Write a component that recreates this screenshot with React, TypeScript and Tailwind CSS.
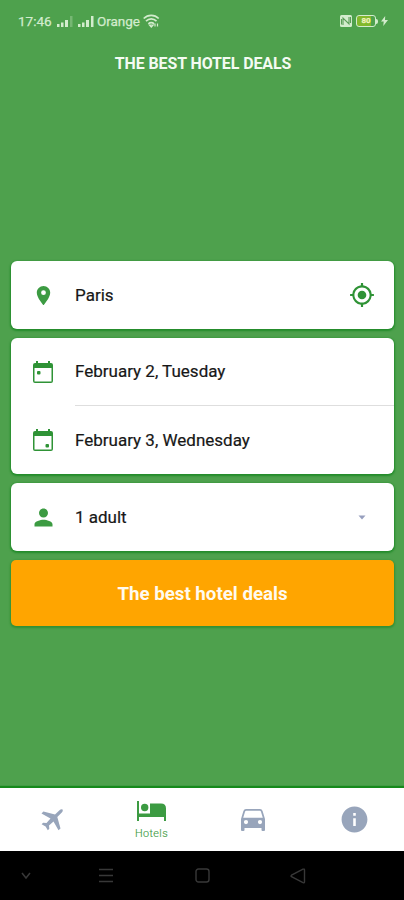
import type { ReactNode } from 'react';
import { MdPlace, MdMyLocation, MdPerson, MdInfo } from 'react-icons/md';

function Calendar({ end = false }: { end?: boolean }) {
  return (
    <svg width="22" height="24" viewBox="0 0 22 24" fill="#2f9336">
      <path fillRule="evenodd" d="M4 1h2v2h10V1h2v2h1a2 2 0 0 1 2 2v16a2 2 0 0 1-2 2H3a2 2 0 0 1-2-2V5a2 2 0 0 1 2-2h1V1ZM2.500 8v13.500h17V8h-17Z" />
      {end ? <rect x="13.500" y="16" width="3.500" height="3.500" rx="1" /> : <rect x="5" y="11" width="3.500" height="3.500" rx="1" />}
    </svg>
  );
}

function Signal({ full = false }: { full?: boolean }) {
  return (
    <svg width="18" height="12" viewBox="0 0 18 12" fill="#d3eccd">
      <path d="M1 9h2.500v3H1zM5 7.500h2.500V12H5zM9 5h3v7H9z" />
      <path d="M14 1h2.500v11H14z" opacity={full ? 1 : 0.3} />
    </svg>
  );
}

function Wifi() {
  return (
    <svg width="17" height="14" viewBox="0 0 17 14" fill="none" stroke="#d3eccd" strokeWidth="1.700">
      <path d="M.7 4.500c4.300-4.200 10.800-4.200 15 0M3 7.200c3-3 7.500-3 10.500 0M5.400 9.800c1.600-1.600 4-1.600 5.600 0" />
      <path d="m6.500 11 1.800 2 1.800-2ZM12 9.500v3M14.500 9.500v3" strokeWidth="1.200" />
    </svg>
  );
}

function Row({ icon, children, right }: { icon: ReactNode; children: ReactNode; right?: ReactNode }) {
  return (
    <div className="flex h-[68px] items-center">
      <div className="flex w-16 shrink-0 items-center justify-center text-[#3c9b42]">{icon}</div>
      <div className="flex-1 whitespace-nowrap pt-px text-[17px] text-[#171717] [-webkit-text-stroke:0.200px]">{children}</div>
      {right && <div className="flex w-16 items-center justify-center">{right}</div>}
    </div>
  );
}

const card = 'rounded-[6px] bg-white shadow-[0_1px_2px_1px_#238c2b]';

export default function App() {
  return (
    <div className="flex h-[900px] w-[404px] flex-col overflow-hidden bg-[#4ea14d] font-['Roboto',sans-serif]">
      <header className="flex h-[42px] shrink-0 items-center pl-[18px] pr-[16px] text-[13px] text-[#d3eccd] [-webkit-text-stroke:0.250px]">
        <span className="w-[38px] text-[13.500px]">17:46</span>
        <Signal />
        <span className="ml-[3px] flex"><Signal full /></span>
        <span className="ml-[2px] w-[46px] text-[13.500px] tracking-[-0.050px]">Orange</span>
        <Wifi />
        <div className="ml-auto flex items-center">
          <svg width="12" height="12" viewBox="0 0 12 12">
            <rect width="12" height="12" rx="1.500" fill="#d3eccd" />
            <path d="M3 10V3l6 6V2M1.500 9.500V4M10.500 8V2" fill="none" stroke="#5b9e58" strokeWidth="1.100" />
          </svg>
          <div className="ml-[4px] flex h-[12px] w-[20px] items-center justify-center rounded-[3px] border border-[#d3eccd] bg-linear-to-r from-[#82b82c] from-75% to-[#4ea14d] to-75% text-[8px] font-bold leading-none text-[#f1f3be]">80</div>
          <span className="h-[5px] w-[2px] rounded-r bg-[#d3eccd]" />
          <svg className="ml-[3px]" width="7" height="10" viewBox="0 0 7 10" fill="#d3eccd"><path d="M4.200 0 0 5.500h2.700L2.300 10 7 4H4z" /></svg>
        </div>
      </header>
      <h1 className="h-[219px] shrink-0 pt-[12px] pl-[2px] text-center text-[15.900px] font-bold leading-5 tracking-[-0.050px] text-[#f4fbf2]">THE BEST HOTEL DEALS</h1>

      <main className="flex flex-1 flex-col gap-[9px] pl-[11px] pr-[10px]">
        <section className={card}>
          <Row icon={<MdPlace size={23} />} right={<MdMyLocation size={26} color="#2f9336" />}>Paris</Row>
        </section>
        <section className={card}>
          <div className="-mb-px"><Row icon={<Calendar />}><span className="block pb-[2px]">February 2, Tuesday</span></Row></div>
          <div className="ml-16 border-t border-[#dedede]" />
          <Row icon={<Calendar end />}>February 3, Wednesday</Row>
        </section>
        <section className={card}>
          <Row
            icon={<MdPerson size={27} />}
            right={<svg width="8" height="5" viewBox="0 0 8 5" fill="#979fbe"><path d="M.5.500h7L4 4.500z" /></svg>}
          >
            1 adult
          </Row>
        </section>
        <button className="h-[66px] rounded-[5px] bg-[#ffa500] pt-[2px] text-[18.700px] font-bold text-[#fffaf0] shadow-[0_1px_2px_1px_#339034]">The best hotel deals</button>
      </main>

      <nav className="grid h-[64px] shrink-0 grid-cols-4 items-center border-t border-[#168a1c] bg-white text-[#98a5bb] shadow-[0_-1px_1px_#168a1c]">
        <div className="flex justify-center pl-[2px]">
          <svg width="22" height="22" viewBox="0 0 22 22" fill="currentColor">
            <path d="M21.600.500q.6 1.500-.8 3L16.300 8l3.200 11.500-2 1.800-5-8.800-4.500 4 .3 3.200-1.500 1.600-2.200-3.800-4-2.200 1.500-1.500 3.400.2 4-4.500L.500 4.500l1.900-2L14 5.600l4.500-4.400q1.500-1.300 3.100-.7Z" />
          </svg>
        </div>
        <div className="flex flex-col items-center pt-px text-[#3c9b42]">
          <svg width="30" height="22" viewBox="0 0 30 22" fill="currentColor">
            <path d="M0 1h2v12.500h11V3.500h11q5 0 5 5v12.500h-2v-4H2v4H0Z" />
            <circle cx="7.700" cy="7.500" r="3.700" />
          </svg>
          <span className="mt-[6px] text-[10.800px] font-light leading-3 tracking-[0.400px] [-webkit-text-stroke:0.150px]">Hotels</span>
        </div>
        <div className="flex justify-center pl-px">
          <svg width="24" height="22" viewBox="0 0 24 22" fill="currentColor">
            <path fillRule="evenodd" d="M5 0h14q2 0 2.600 2L24 10v11q0 1-1 1h-1.500q-1 0-1-1v-2h-17v2q0 1-1 1H1q-1 0-1-1V10l2.400-8Q3 0 5 0Zm.2 1.700q-.8 0-1.100.8L2.200 8.700h19.600l-1.900-6.200q-.3-.8-1.100-.8ZM5 11a2.100 2.100 0 1 0 0 4.200A2.100 2.100 0 0 0 5 11Zm14 0a2.100 2.100 0 1 0 0 4.200 2.100 2.100 0 0 0 0-4.200Z" />
          </svg>
        </div>
        <div className="flex justify-center pl-[2px]"><MdInfo size={31} /></div>
      </nav>

      <footer className="flex h-[49px] shrink-0 items-center bg-black pl-[21px] text-[#383838]">
        <svg width="10" height="8" viewBox="0 0 10 8" fill="none" stroke="currentColor" strokeWidth="1.500"><path d="m1 1 4 5 4-5" /></svg>
        <svg className="ml-[68px]" width="14" height="15" viewBox="0 0 14 15" fill="none" stroke="currentColor" strokeWidth="1.500"><path d="M0 1.500h14M0 7.500h14M0 13.500h14" /></svg>
        <svg className="ml-[82px]" width="15" height="15" viewBox="0 0 15 15" fill="none" stroke="currentColor" strokeWidth="1.400"><rect x="1" y="1" width="13" height="13" rx="2.500" /></svg>
        <svg className="ml-[80px]" width="16" height="16" viewBox="0 0 16 16" fill="none" stroke="currentColor" strokeWidth="1.400"><path d="M1.500 7.200 13 1.200q1.500-.5 1.500 1v11.500q0 1.500-1.500 1L1.500 8.700q-1-.7 0-1.500Z" /></svg>
      </footer>
    </div>
  );
}
